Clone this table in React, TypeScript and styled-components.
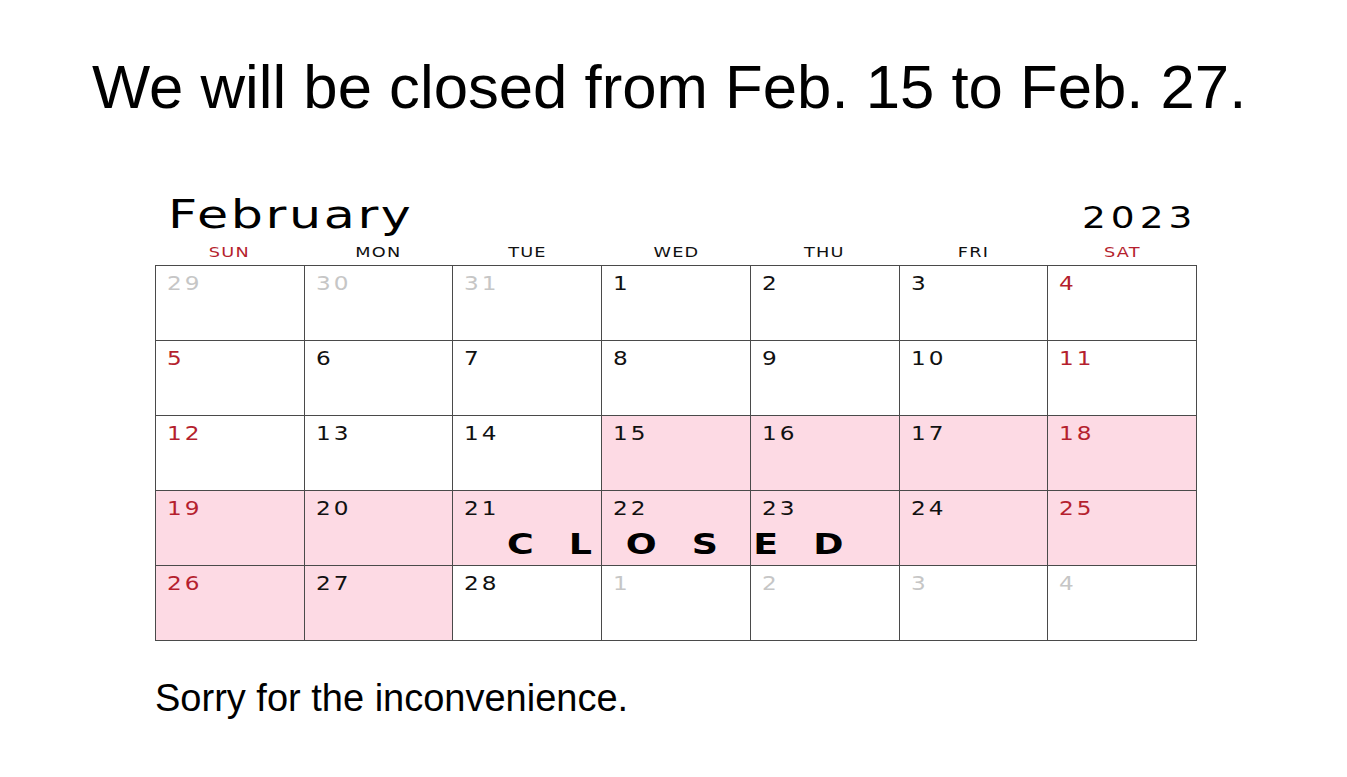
import React from 'react';
import styled, { createGlobalStyle } from 'styled-components';

const GlobalStyle = createGlobalStyle`
    html, body {
        margin: 0;
        padding: 0;
        background: #ffffff;
    }
`

const Page = styled.div`
    width: 1347px;
    height: 777px;
    box-sizing: border-box;
    padding-top: 56px;
    font-family: "Liberation Sans", Arial, sans-serif;
    color: #000;
    overflow: hidden;
`

const Title = styled.h1`
    margin: 0 0 0 92px;
    font-weight: normal;
    font-size: 61.7px;
    line-height: 1;
`

const Calendar = styled.div`
    width: 1042px;
    margin: 77px 0 0 155px;
    font-family: "DejaVu Sans", sans-serif;
`

const MonthBar = styled.div`
    display: flex;
    justify-content: space-between;
    align-items: baseline;
    padding: 0 4px 0 13px;
`

// the print font is a wide geometric face, so widen DejaVu a little
const MonthName = styled.span`
    display: inline-block;
    font-size: 39px;
    line-height: 1;
    letter-spacing: 2px;
    transform: scaleX(1.3);
    transform-origin: left center;
`

const Year = styled.span`
    display: inline-block;
    font-size: 30px;
    line-height: 1;
    letter-spacing: 4px;
    margin-right: -4px;
    transform: scaleX(1.25);
    transform-origin: right center;
`

const WeekRow = styled.div`
    display: grid;
    grid-template-columns: repeat(7, 1fr);
    margin-top: 11px;
    margin-bottom: 6px;
`

const WeekDay = styled.span<{ $red?: boolean }>`
    display: block;
    text-align: center;
    font-size: 14.5px;
    line-height: 1;
    letter-spacing: 1px;
    transform: scaleX(1.22);
    color: ${p => (p.$red ? '#b51f2e' : '#111')};
`

const Grid = styled.div`
    position: relative;
    display: grid;
    grid-template-columns: repeat(7, 1fr);
    grid-auto-rows: 75px;
    border-top: 1px solid #4a4a4a;
    border-left: 1px solid #4a4a4a;
`

const Cell = styled.div<{ $closed?: boolean }>`
    box-sizing: border-box;
    border-right: 1px solid #4a4a4a;
    border-bottom: 1px solid #4a4a4a;
    background: ${p => (p.$closed ? '#fddae4' : '#ffffff')};
    padding: 8px 0 0 11px;
`

const DayNum = styled.span<{ $tone: 'black' | 'red' | 'grey' }>`
    display: inline-block;
    font-size: 19px;
    line-height: 1;
    letter-spacing: 2.5px;
    transform: scaleX(1.22);
    transform-origin: left center;
    color: ${p => (p.$tone === 'red' ? '#b51f2e' : p.$tone === 'grey' ? '#c6c6c6' : '#111')};
`

const ClosedLabel = styled.div`
    position: absolute;
    left: 351px;
    top: 265px;
    font-size: 28px;
    font-weight: bold;
    line-height: 1;
    letter-spacing: 27px;
    transform: scaleX(1.3);
    transform-origin: left center;
    color: #000;
    pointer-events: none;
`

const Note = styled.p`
    margin: 38px 0 0 155px;
    font-size: 38px;
    line-height: 1;
`

const weekDays = ['SUN', 'MON', 'TUE', 'WED', 'THU', 'FRI', 'SAT'];

type Day = { n: number; other?: boolean; closed?: boolean };

const days: Day[] = [
    { n: 29, other: true }, { n: 30, other: true }, { n: 31, other: true },
    ...Array.from({ length: 28 }, (_, i) => ({ n: i + 1, closed: i + 1 >= 15 && i + 1 <= 27 })),
    { n: 1, other: true }, { n: 2, other: true }, { n: 3, other: true }, { n: 4, other: true },
];

export default function App() {
    return (
        <Page>
            <GlobalStyle />
            <Title>We will be closed from Feb. 15 to Feb. 27.</Title>
            <Calendar>
                <MonthBar>
                    <MonthName>February</MonthName>
                    <Year>2023</Year>
                </MonthBar>
                <WeekRow>
                    {weekDays.map((d, i) => (
                        <WeekDay key={d} $red={i === 0 || i === 6}>{d}</WeekDay>
                    ))}
                </WeekRow>
                <Grid>
                    {days.map((d, i) => {
                        const col = i % 7;
                        const tone = d.other ? 'grey' : col === 0 || col === 6 ? 'red' : 'black';
                        return (
                            <Cell key={i} $closed={d.closed}>
                                <DayNum $tone={tone}>{d.n}</DayNum>
                            </Cell>
                        );
                    })}
                    <ClosedLabel>CLOSED</ClosedLabel>
                </Grid>
            </Calendar>
            <Note>Sorry for the inconvenience.</Note>
        </Page>
    );
}
